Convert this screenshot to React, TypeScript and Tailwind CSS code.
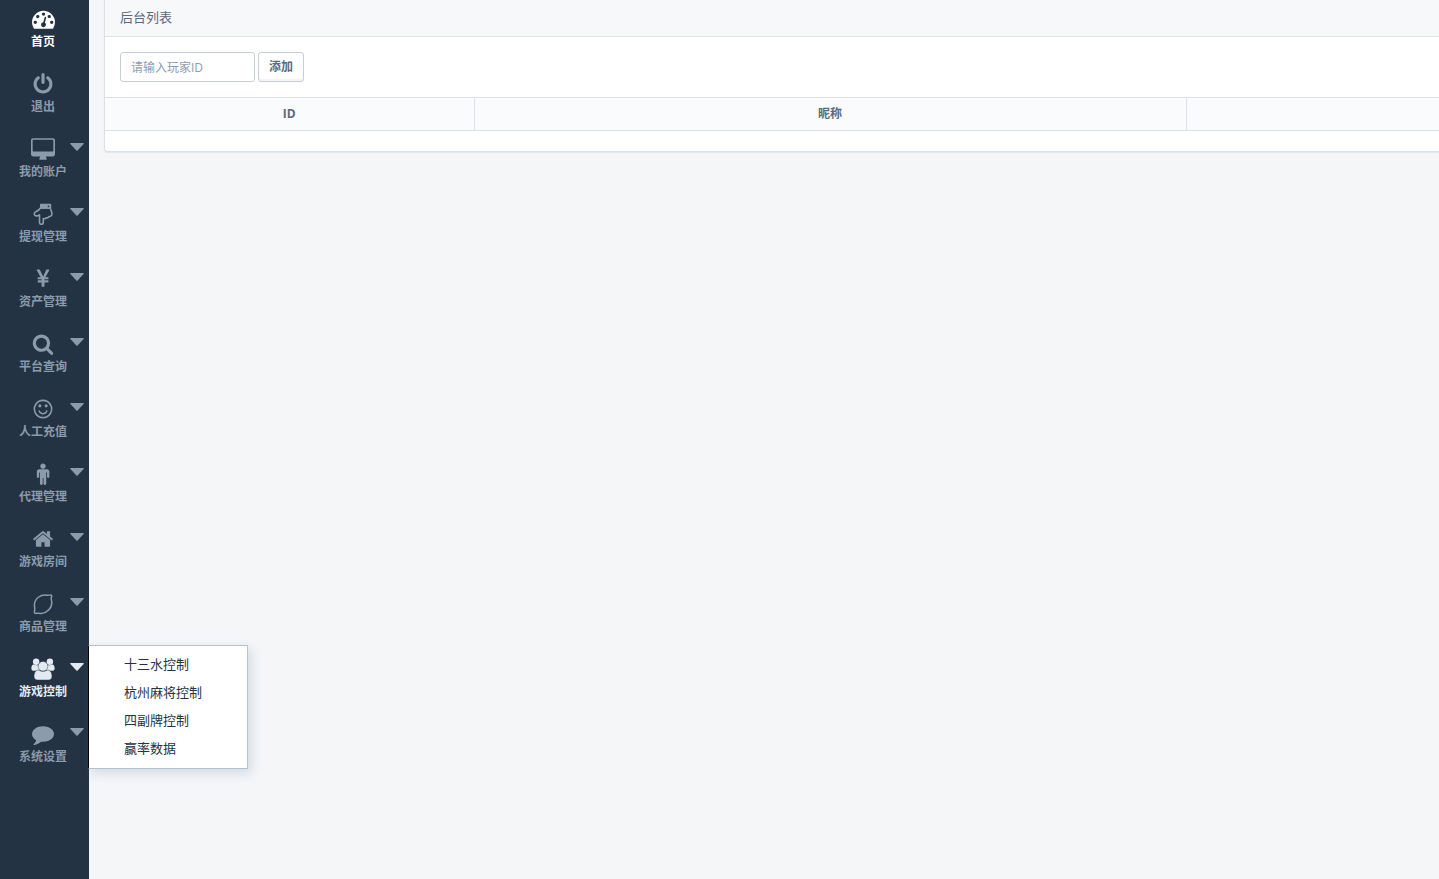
import type { ReactNode } from 'react';

type MenuItem = {
  label: string;
  icon: ReactNode;
  active?: boolean;
  hasMenu?: boolean;
  children?: string[];
};

const Glyph = ({ d, className = 'size-[22px]', viewBox = '0 0 1792 1792' }: { d: string; className?: string; viewBox?: string }) => (
  <svg aria-hidden="true" viewBox={viewBox} className={className} fill="currentColor">
    <path d={d} />
  </svg>
);

const HandDown = () => (
  <svg aria-hidden="true" viewBox="0 0 22 22" className="size-[22px]" fill="none" stroke="currentColor" strokeWidth="1.6" strokeLinejoin="round">
    <path d="M8.500 5C7.300 7 5.500 7.900 3.700 8.700c-2 .9-1.900 4 .2 4.200 1.400.1 2.700-.4 3.600-1.100v7.400c0 2.800 3.800 2.800 3.800 0v-3.700c1.200.5 2.400.2 3-.7 1.200.3 2.300-.2 2.700-1.200 2.100 0 3-1.200 2.900-3.100-.1-2-1.300-3.500-1.600-5.500Z" />
    <path d="M8.800 1.600h9.600V5H8.800z" fill="currentColor" />
    <circle cx="16.500" cy="3.300" r=".9" fill="#243343" stroke="none" />
  </svg>
);

const Lemon = () => (
  <svg aria-hidden="true" viewBox="0 0 22 22" className="size-[22px]" fill="none" stroke="currentColor" strokeWidth="1.5" strokeLinejoin="round">
    <path d="M19.600 2.400c-1-.9-2.700.1-4.600-.2C8.500 1.300 2.800 5.500 2.400 11.500c-.1 2.600.9 4.600.1 6.500-.6 1.600.4 2.700 1.900 2.300 1.500-.4 2.800.4 4.900.2 6-.6 10.700-5.500 10.500-11.300-.1-2-1.100-3.400-.4-5 .3-.7.7-1.300.2-1.800Z" />
  </svg>
);

const Group = () => (
  <svg aria-hidden="true" viewBox="0 0 26 24" className="h-[22px] w-6" fill="currentColor">
    <circle cx="5.500" cy="4" r="3.500" />
    <circle cx="20.500" cy="4" r="3.500" />
    <path d="M.3 11.500C.3 8.500 1.400 7 2.800 7c1.600 1.100 3.800 1.100 5.200.3L10 14H3C1.500 14 .3 13 .3 11.500ZM25.700 11.500c0-3-1.100-4.500-2.500-4.500-1.600 1.100-3.800 1.100-5.200.3L16 14h7c1.500 0 2.700-1 2.700-2.500Z" />
    <g stroke="#243343" strokeWidth=".5">
      <path d="M7.500 13c-3 .6-4.300 3.600-4.300 6.800 0 2.600 1.300 4.200 3.800 4.200h12c2.500 0 3.800-1.600 3.800-4.200 0-3.200-1.300-6.200-4.300-6.800-3.500 2-7.500 2-11 0Z" />
      <circle cx="13" cy="9" r="5.300" />
    </g>
  </svg>
);

const items: MenuItem[] = [
  {
    label: '首页',
    active: true,
    icon: (
      <Glyph
        className="h-[22px] w-[23px]"
        viewBox="0 40 1792 1714"
        d="M384 1152q0-53-37.5-90.5t-90.5-37.5-90.5 37.5-37.5 90.5 37.5 90.5 90.5 37.5 90.5-37.5 37.5-90.5zm192-448q0-53-37.5-90.5t-90.5-37.5-90.5 37.5-37.5 90.5 37.5 90.5 90.5 37.5 90.5-37.5 37.5-90.5zm428 481l101-382q6-26-7.5-48.5t-38.5-29.5-48 6.5-30 39.5l-101 382q-60 5-107 43.5t-63 98.5q-20 77 20 146t117 89 146-20 89-117q16-60-6-117t-72-91zm660-33q0-53-37.5-90.5t-90.5-37.5-90.5 37.5-37.5 90.5 37.5 90.5 90.5 37.5 90.5-37.5 37.5-90.5zm-640-640q0-53-37.5-90.5t-90.5-37.5-90.5 37.5-37.5 90.5 37.5 90.5 90.5 37.5 90.5-37.5 37.5-90.5zm448 192q0-53-37.5-90.5t-90.5-37.5-90.5 37.5-37.5 90.5 37.5 90.5 90.5 37.5 90.5-37.5 37.5-90.5zm320 448q0 261-141 483-19 29-54 29h-1402q-35 0-54-29-141-221-141-483 0-182 71-348t191-286 286-191 348-71 348 71 286 191 191 286 71 348z"
      />
    ),
  },
  {
    label: '退出',
    icon: (
      <Glyph d="M1664 896q0 156-61 298t-164 245-245 164-298 61-298-61-245-164-164-245-61-298q0-182 80.5-343t226.5-270q43-32 95.5-25t83.5 50q32 42 24.5 94.5t-49.5 84.5q-98 74-151.5 181t-53.5 228q0 104 40.5 198.5t109.5 163.5 163.5 109.5 198.5 40.5 198.5-40.5 163.5-109.5 109.5-163.5 40.5-198.5q0-121-53.5-228t-151.5-181q-42-32-49.5-84.5t24.5-94.5q31-43 84-50t95 25q146 109 226.5 270t80.5 343zm-640-768v640q0 52-38 90t-90 38-90-38-38-90v-640q0-52 38-90t90-38 90 38 38 90z" />
    ),
  },
  {
    label: '我的账户',
    hasMenu: true,
    icon: (
      <Glyph
        className="h-[22px] w-6"
        viewBox="0 -16 1856 1700"
        d="M1728 992v-832q0-13-9.5-22.5t-22.5-9.5h-1536q-13 0-22.5 9.5t-9.5 22.5v832q0 13 9.5 22.5t22.5 9.5h1536q13 0 22.5-9.5t9.5-22.5zm128-832v1088q0 66-47 113t-113 47h-544q0 37 16 77.5t32 71 16 43.5q0 26-19 45t-45 19h-448q-26 0-45-19t-19-45q0-14 16-44t32-70 16-78h-544q-66 0-113-47t-47-113v-1088q0-66 47-113t113-47h1536q66 0 113 47t47 113z"
      />
    ),
  },
  { label: '提现管理', hasMenu: true, icon: <HandDown /> },
  {
    label: '资产管理',
    hasMenu: true,
    icon: (
      <Glyph d="M985.5 1536h-172q-13 0-22.5-9t-9.5-23v-330h-288q-13 0-22.5-9t-9.5-23v-103q0-13 9.5-22.5t22.5-9.5h288v-85h-288q-13 0-22.5-9t-9.5-23v-104q0-13 9.5-22.5t22.5-9.5h214l-321-578q-8-16 0-32 10-16 28-16h194q19 0 29 18l215 425q19 38 56 125 10-24 30.5-68t27.5-61l191-420q8-19 29-19h191q17 0 27 16 9 14 1 31l-313 579h215q13 0 22.5 9.5t9.5 22.5v104q0 14-9.5 23t-22.5 9h-290v85h290q13 0 22.5 9.5t9.5 22.5v103q0 14-9.5 23t-22.5 9h-290v330q0 13-9.5 22.5t-22.5 9.5z" />
    ),
  },
  {
    label: '平台查询',
    hasMenu: true,
    icon: (
      <Glyph d="M1216 832q0-185-131.5-316.5t-316.5-131.5-316.5 131.5-131.5 316.5 131.5 316.5 316.5 131.5 316.5-131.5 131.5-316.5zm512 832q0 52-38 90t-90 38q-54 0-90-38l-343-342q-179 124-399 124-143 0-273.5-55.5t-225-150-150-225-55.5-273.5 55.5-273.5 150-225 225-150 273.5-55.5 273.5 55.5 225 150 150 225 55.5 273.5q0 220-124 399l343 343q37 37 37 90z" />
    ),
  },
  {
    label: '人工充值',
    hasMenu: true,
    icon: (
      <Glyph d="M1262 1075q-37 121-138 195t-228 74-228-74-138-195q-8-25 4-48.5t38-31.5q25-8 48.5 4t31.5 38q25 80 92.5 129.5t151.5 49.5 151.5-49.5 92.5-129.5q8-26 32-38t49-4 37 31.5 4 48.5zm-494-435q0 53-37.5 90.5t-90.5 37.5-90.5-37.5-37.5-90.5 37.5-90.5 90.5-37.5 90.5 37.5 37.5 90.5zm512 0q0 53-37.5 90.5t-90.5 37.5-90.5-37.5-37.5-90.5 37.5-90.5 90.5-37.5 90.5 37.5 37.5 90.5zm256 256q0-130-51-248.5t-136.5-204-204-136.5-248.5-51-248.5 51-204 136.5-136.5 204-51 248.5 51 248.5 136.5 204 204 136.5 248.5 51 248.5-51 204-136.5 136.5-204 51-248.5zm128 0q0 209-103 385.5t-279.5 279.5-385.5 103-385.5-103-279.5-279.5-103-385.5 103-385.5 279.5-279.5 385.5-103 385.5 103 279.5 279.5 103 385.5z" />
    ),
  },
  {
    label: '代理管理',
    hasMenu: true,
    icon: (
      <Glyph d="M1416 704v416q0 40-28 68t-68 28-68-28-28-68v-352h-64v912q0 46-33 79t-79 33-79-33-33-79v-464h-64v464q0 46-33 79t-79 33-79-33-33-79v-912h-64v352q0 40-28 68t-68 28-68-28-28-68v-416q0-80 56-136t136-56h640q80 0 136 56t56 136zm-296-448q0 93-65.5 158.5t-158.5 65.5-158.5-65.5-65.5-158.5 65.5-158.5 158.5-65.5 158.5 65.5 65.5 158.5z" />
    ),
  },
  {
    label: '游戏房间',
    hasMenu: true,
    icon: (
      <Glyph d="M1472 992v480q0 26-19 45t-45 19h-384v-384h-256v384h-384q-26 0-45-19t-19-45v-480q0-1 .5-3t.5-3l575-474 575 474q1 2 1 6zm223-69l-62 74q-8 9-21 11h-3q-13 0-21-7l-692-577-692 577q-12 8-24 7-13-2-21-11l-62-74q-8-10-7-23.5t11-21.5l719-599q32-26 76-26t76 26l244 204v-195q0-14 9-23t23-9h192q14 0 23 9t9 23v408l219 182q10 8 11 21.5t-7 23.5z" />
    ),
  },
  { label: '商品管理', hasMenu: true, icon: <Lemon /> },
  {
    label: '游戏控制',
    active: true,
    hasMenu: true,
    icon: <Group />,
    children: ['十三水控制', '杭州麻将控制', '四副牌控制', '赢率数据'],
  },
  {
    label: '系统设置',
    hasMenu: true,
    icon: (
      <Glyph d="M1792 896q0 174-120 321.500t-326 233-450 85.500q-70 0-145-8-198 175-460 242-49 14-114 22-17 2-30.500-9t-17.500-29v-1q-3-4-.5-12t2-10 4.500-9.500l6-9 7-8.500 8-9q7-8 31-34.500t34.500-38 31-39.500 32.500-51 27-59 26-76q-157-89-247.500-220t-90.500-281q0-130 71-248.500t191-204.500 286-136.500 348-50.500q244 0 450 85.500t326 233 120 321.500z" />
    ),
  },
];

const Sidebar = () => (
  <nav className="w-[89px] shrink-0 bg-[#243343]">
    <ul>
      {items.map((item) => (
        <li key={item.label} className="relative h-[65px]">
          <a
            href="#"
            className={`flex h-full items-start pt-2 pr-[5px] pl-4 hover:text-white ${item.active ? 'text-[#e4eaf1]' : 'text-[#8b9bac]'}`}
          >
            <span className="flex flex-1 flex-col items-center gap-[3px]">
              {item.icon}
              <span className="text-xs leading-[18px] font-bold whitespace-nowrap">{item.label}</span>
            </span>
            <svg aria-hidden="true" viewBox="0 0 14 8" className="mt-[5px] h-2 w-3.5" fill="currentColor">
              {item.hasMenu && <path d="M.8 0h12.400q1 .3.400 1.100L7.600 7.500q-.6.500-1.200 0L.4 1.100Q-.2.3.8 0Z" />}
            </svg>
          </a>
          {item.children && (
            <ul className="absolute -top-[5px] left-full -ml-px w-40 border border-[#b4c2d0] border-l-black bg-white pt-1 pb-1.5 shadow-[3px_4px_10px_rgba(60,110,150,0.2)]">
              {item.children.map((child) => (
                <li key={child}>
                  <a href="#" className="block pl-[35px] text-[13px] leading-7 text-[#243343] hover:bg-gray-100">
                    {child}
                  </a>
                </li>
              ))}
            </ul>
          )}
        </li>
      ))}
    </ul>
  </nav>
);

const PlayerPanel = () => (
  <section className="rounded-bl border border-t-0 border-r-0 border-[#dce1e8] bg-white shadow-[0_1px_1px_rgba(90,150,170,0.15)]">
    <h1 className="border-b border-[#dce1e8] bg-[#f6f8fa] px-[15px] pt-[7px] pb-[9px] text-[13px] leading-5 text-[#5a6a7a]">后台列表</h1>
    <form className="flex gap-[3px] p-[15px]" onSubmit={(e) => e.preventDefault()}>
      <input
        type="text"
        aria-label="玩家ID"
        placeholder="请输入玩家ID"
        className="h-[30px] w-[135px] rounded-[3px] border border-[#c8ced6] bg-white px-2.5 text-xs text-[#5a6a7a] placeholder:text-[#8a9db3]"
      />
      <button
        type="submit"
        className="h-[30px] rounded-[3px] border border-[#c5cdd6] bg-white px-2.5 text-xs font-bold text-[#5a6a7a] shadow-[inset_0_-2px_1px_rgba(90,110,130,0.08)]"
      >
        添加
      </button>
    </form>
    <table className="w-full table-fixed border-collapse text-xs text-[#5a6a7a]">
      <thead>
        <tr className="h-[33px] border-y border-[#dce1e8] bg-[#fafbfd]">
          <th scope="col" className="w-[369px] border-r border-[#dce1e8] font-bold">ID</th>
          <th scope="col" className="w-[712px] border-r border-[#dce1e8] font-bold">昵称</th>
          <td />
        </tr>
      </thead>
      <tbody />
    </table>
    <div className="h-5" />
  </section>
);

export default function App() {
  return (
    <div className="flex min-h-screen overflow-x-hidden bg-[#f4f6f8] font-['Open_Sans','Noto_Sans_CJK_SC',sans-serif]">
      <Sidebar />
      <main className="min-w-0 flex-1 pl-[15px]">
        <PlayerPanel />
      </main>
    </div>
  );
}
